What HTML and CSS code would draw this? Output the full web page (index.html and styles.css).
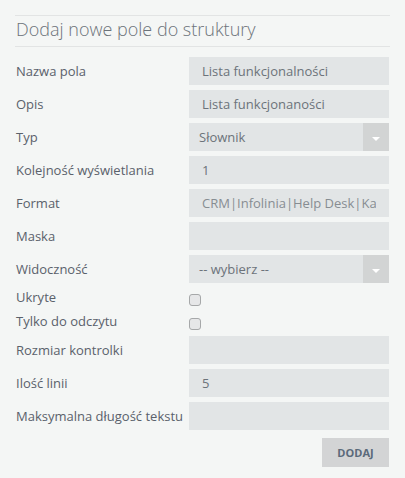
FILE: index.html
```html
<!DOCTYPE html>
<html lang="pl">
<head>
    <meta charset="UTF-8">
    <meta name="viewport" content="width=device-width, initial-scale=1.0">
    <title>Dodaj nowe pole do struktury</title>
    <link rel="stylesheet" href="styles.css">
</head>
<body>
    <div class="panel">
        <h2 class="panel-title">Dodaj nowe pole do struktury</h2>

        <form class="field-form" onsubmit="return false;">
            <label class="field-label" for="name">Nazwa pola</label>
            <input class="field-input" id="name" type="text" value="Lista funkcjonalności">

            <label class="field-label" for="desc">Opis</label>
            <input class="field-input" id="desc" type="text" value="Lista funkcjonaności">

            <label class="field-label" for="type">Typ</label>
            <div class="select-wrap">
                <select class="field-select" id="type">
                    <option>Słownik</option>
                    <option>Tekst</option>
                    <option>Liczba</option>
                </select>
                <span class="select-arrow"></span>
            </div>

            <label class="field-label" for="order">Kolejność wyświetlania</label>
            <input class="field-input" id="order" type="text" value="1">

            <label class="field-label" for="format">Format</label>
            <input class="field-input muted" id="format" type="text" value="CRM|Infolinia|Help Desk|Kadry">

            <label class="field-label" for="mask">Maska</label>
            <input class="field-input" id="mask" type="text">

            <label class="field-label" for="visibility">Widoczność</label>
            <div class="select-wrap">
                <select class="field-select" id="visibility">
                    <option>-- wybierz --</option>
                    <option>Wszyscy</option>
                    <option>Administratorzy</option>
                </select>
                <span class="select-arrow"></span>
            </div>

            <label class="field-label check-label" for="hidden">Ukryte</label>
            <input class="field-check" id="hidden" type="checkbox">

            <label class="field-label check-label" for="readonly">Tylko do odczytu</label>
            <input class="field-check" id="readonly" type="checkbox">

            <label class="field-label" for="size">Rozmiar kontrolki</label>
            <input class="field-input" id="size" type="text">

            <label class="field-label" for="lines">Ilość linii</label>
            <input class="field-input" id="lines" type="text" value="5">

            <label class="field-label" for="maxlen">Maksymalna długość tekstu</label>
            <input class="field-input" id="maxlen" type="text">
        </form>

        <div class="actions">
            <button class="add-btn" type="button">Dodaj</button>
        </div>
    </div>
</body>
</html>
```

FILE: styles.css
```css
:root {
    --bg: #f4f6f5;
    --line: #e2e4e4;
    --field: #e2e5e6;
    --field-dark: #d2d4d4;
    --text: #5a616b;
    --text-light: #6c737a;
}

* {
    box-sizing: border-box;
    margin: 0;
    padding: 0;
}

body {
    font-family: 'Open Sans', 'Noto Sans', sans-serif;
    background-color: var(--bg);
    color: var(--text);
    font-size: 13px;
}

.panel {
    padding: 15px 15px 0;
}

.panel-title {
    font-size: 18px;
    font-weight: 300;
    line-height: 26px;
    color: var(--text-light);
    border-top: 1px solid var(--line);
    border-bottom: 1px solid var(--line);
    padding: 0 0 4px 1px;
}

.field-form {
    display: grid;
    grid-template-columns: 174px 200px;
    row-gap: 5px;
    margin-top: 10px;
}

.field-label {
    line-height: 28px;
    padding-left: 1px;
    white-space: nowrap;
}

.field-label.check-label {
    line-height: 19px;
}

.field-input,
.field-select {
    height: 28px;
    border: none;
    outline: none;
    background-color: var(--field);
    font-family: inherit;
    font-size: 13px;
    color: var(--text-light);
}

.field-input {
    width: 100%;
    padding: 0 13px;
}

.field-input.muted {
    color: #878d92;
}

.select-wrap {
    display: flex;
    height: 28px;
}

.field-select {
    flex: 1;
    min-width: 0;
    padding: 0 10px;
    appearance: none;
    -webkit-appearance: none;
    border-radius: 0;
}

.select-arrow {
    width: 26px;
    background-color: var(--field-dark);
    display: flex;
    justify-content: center;
    align-items: center;
    padding-top: 3px;
}

.select-arrow:after {
    content: "";
    border-left: 4px solid transparent;
    border-right: 4px solid transparent;
    border-top: 4px solid #fff;
}

.field-check {
    appearance: none;
    -webkit-appearance: none;
    width: 12px;
    height: 12px;
    margin-top: 6px;
    border: 1px solid #a6a8a9;
    border-radius: 3px;
    background-color: #e6e7e8;
}

.field-check:checked {
    background-color: #9aa3ad;
}

.actions {
    display: flex;
    justify-content: flex-end;
    margin-top: 8px;
    padding-right: 1px;
}

.add-btn {
    width: 67px;
    height: 29px;
    border: none;
    background-color: #d3d4d5;
    color: #5b6a7a;
    font-family: inherit;
    font-size: 11px;
    font-weight: 700;
    text-transform: uppercase;
    cursor: pointer;
}
```
